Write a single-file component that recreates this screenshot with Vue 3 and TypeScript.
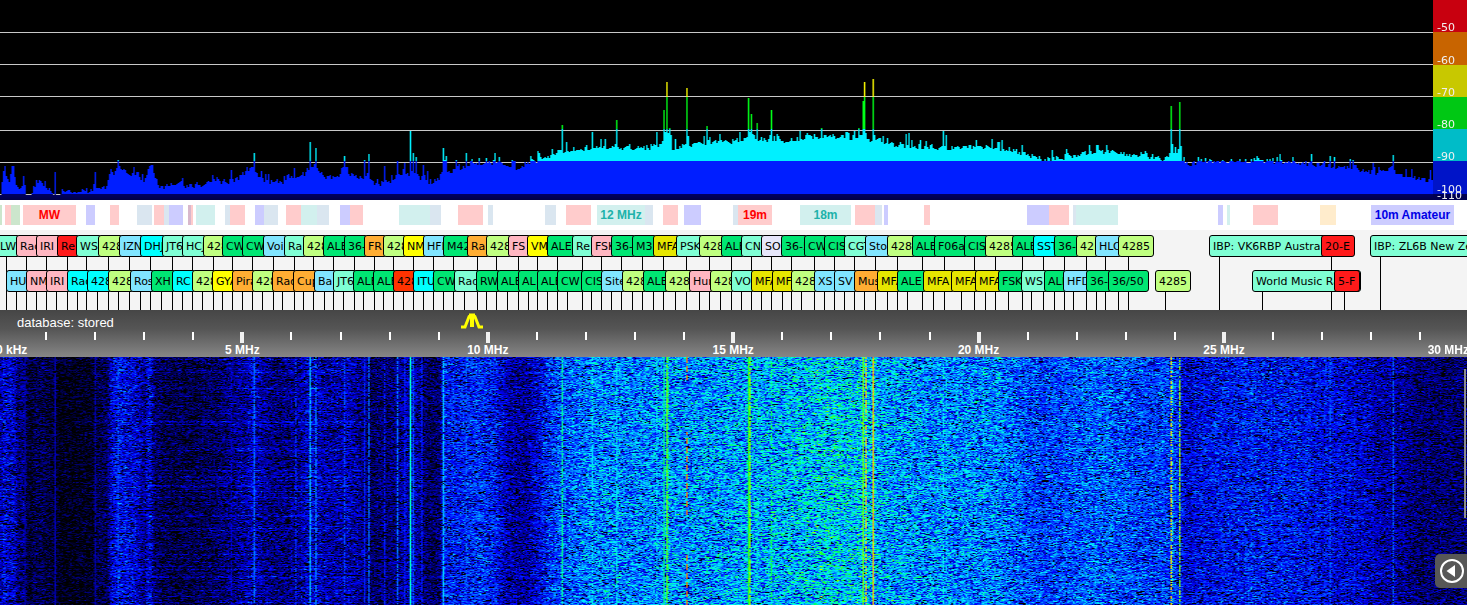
<script setup lang="ts">
import { onMounted, ref } from 'vue'

type Tone = 'aqua' | 'pink' | 'red' | 'lime' | 'sky' | 'cyan' | 'green' | 'orange' | 'yellow' | 'olive' | 'lavender' | 'scarlet'
type Station = [at: number, text: string, tone: Tone, width?: number]
type Point = [x: number, value: number]

const SPAN = 1467
const BINS = 1024
const pct = (v: number): string => (v / SPAN) * 100 + '%'

const upper: Station[] = [
  [-4, 'LW', 'aqua'], [16, 'Radio', 'pink'], [36, 'IRI', 'pink'], [57, 'Re', 'red'], [76, 'WS', 'aqua'],
  [98, '4285', 'lime'], [119, 'IZN', 'sky'], [140, 'DHJ', 'cyan'], [162, 'JT65', 'aqua'], [182, 'HCJB', 'aqua'],
  [203, '4285', 'lime'], [222, 'CW', 'green'], [242, 'CW', 'green'], [263, 'Voi', 'sky'], [284, 'Ra', 'aqua'],
  [303, '4285', 'lime'], [323, 'ALE', 'green'], [344, '36-50', 'green'], [364, 'FR', 'orange'], [383, '4285', 'lime'],
  [403, 'NM', 'yellow'], [423, 'HFDL', 'sky'], [443, 'M42', 'green'], [467, 'Ra', 'orange'], [486, '4285', 'lime'],
  [508, 'FS', 'pink'], [527, 'VM', 'yellow'], [547, 'ALE', 'green'], [572, 'Re', 'aqua'], [591, 'FSK', 'pink'],
  [611, '36-50', 'green'], [632, 'M3', 'green'], [653, 'MFA', 'olive'], [676, 'PSK', 'aqua'], [699, '4285', 'lime'],
  [721, 'ALE', 'green'], [741, 'CN', 'aqua'], [761, 'SO', 'lavender'], [781, '36-50', 'green'], [804, 'CW', 'green'],
  [824, 'CIS', 'green'], [844, 'CGT', 'aqua'], [865, 'Sto', 'sky'], [887, '428', 'lime'], [912, 'ALE', 'green'],
  [934, 'F06a', 'green'], [964, 'CIS', 'green'], [985, '4285', 'lime'], [1012, 'ALE', 'green'], [1033, 'SST', 'cyan'],
  [1054, '36-50', 'green'], [1076, '42', 'lime'], [1095, 'HLO', 'sky'], [1118, '4285', 'lime', 36],
  [1209, 'IBP: VK6RBP Australia', 'aqua', 140], [1321, '20-E', 'red', 34], [1370, 'IBP: ZL6B New Zealand', 'aqua', 150],
]

const lower: Station[] = [
  [6, 'HU', 'sky'], [26, 'NM', 'pink'], [46, 'IRI', 'pink'], [67, 'Radio', 'cyan'], [87, '4285', 'cyan'],
  [108, '4285', 'lime'], [130, 'Ross', 'sky'], [151, 'XH', 'green'], [172, 'RC', 'cyan'], [192, '4285', 'lime'],
  [212, 'GYA', 'yellow'], [232, 'Pirat', 'orange'], [252, '4285', 'lime'], [272, 'Radio', 'orange'], [293, 'Cup', 'orange'],
  [314, 'Ba', 'sky'], [333, 'JT65', 'aqua'], [353, 'ALE', 'green'], [373, 'ALE', 'green'], [393, '4285', 'scarlet'],
  [413, 'ITU', 'cyan'], [433, 'CW', 'green'], [454, 'Rad', 'aqua'], [476, 'RW', 'green'], [497, 'ALE', 'green'],
  [518, 'AL', 'green'], [537, 'ALE', 'green'], [557, 'CW', 'green'], [581, 'CIS', 'green'], [601, 'Site', 'sky'],
  [622, '4285', 'lime'], [643, 'ALE', 'green'], [665, '428', 'lime'], [689, 'Hur', 'pink'], [710, '4285', 'lime'],
  [731, 'VO', 'aqua'], [751, 'MFA', 'olive'], [772, 'MFA', 'olive'], [791, '4285', 'lime'], [814, 'XS', 'sky'],
  [834, 'SV', 'sky'], [854, 'Mus', 'orange'], [877, 'MFA', 'olive'], [897, 'ALE', 'green'], [923, 'MFA', 'olive'],
  [951, 'MFA', 'olive'], [975, 'MFA', 'olive'], [998, 'FSK', 'green'], [1021, 'WS', 'aqua'], [1044, 'ALE', 'green'],
  [1063, 'HFD', 'sky'], [1086, '36-50', 'green'], [1108, '36/50', 'green', 41], [1155, '4285', 'lime', 36],
  [1252, 'World Music Radio', 'aqua', 109], [1334, '5-F', 'red', 26],
]

const rows = [
  { name: 'upper', stations: upper },
  { name: 'lower', stations: lower },
].map((row) => ({
  name: row.name,
  stations: row.stations.map(([at, text, tone, width], i) => ({
    text,
    tone,
    left: pct(at),
    stem: pct(at + 10),
    width: pct(width ?? row.stations[i + 1][0] - at + 4),
  })),
}))

const bands: [from: number, to: number, tint: string, text?: string][] = [
  [0, 2, 'moss'], [5, 11, 'rose'], [11, 20, 'moss'], [23, 76, 'rose', 'MW'], [86, 95, 'violet'], [110, 119, 'rose'],
  [137, 152, 'steel'], [154, 164, 'rose'], [164, 169, 'steel'], [169, 183, 'violet'], [188, 191, 'mauve'], [191, 193, 'rose'],
  [196, 215, 'teal'], [225, 230, 'steel'], [230, 245, 'rose'], [255, 264, 'violet'], [264, 278, 'steel'], [286, 301, 'rose'],
  [301, 317, 'teal'], [317, 329, 'steel'], [340, 350, 'violet'], [350, 363, 'rose'], [399, 430, 'teal'], [430, 441, 'steel'],
  [458, 483, 'rose'], [488, 493, 'steel'], [545, 556, 'steel'], [566, 591, 'rose'], [597, 645, 'teal', '12 MHz'],
  [645, 653, 'steel'], [663, 678, 'rose'], [684, 701, 'violet'], [733, 738, 'steel'], [738, 772, 'rose', '19m'],
  [800, 851, 'teal', '18m'], [855, 875, 'rose'], [875, 882, 'steel'], [884, 888, 'violet'], [924, 930, 'rose'],
  [1027, 1049, 'violet'], [1049, 1069, 'rose'], [1073, 1076, 'steel'], [1076, 1118, 'teal'], [1218, 1223, 'violet'],
  [1227, 1230, 'teal'], [1253, 1278, 'rose'], [1320, 1336, 'sand'], [1371, 1454, 'violet', '10m Amateur'],
]

const ticks = Array.from({ length: 29 }, (_, i) => {
  const mhz = i + 1
  return { mhz, major: mhz % 5 === 0, left: pct(-3 + mhz * 49.08) }
})

const levels = [
  { text: '-50', cls: 'l50' },
  { text: '-60', cls: 'l60' },
  { text: '-70', cls: 'l70' },
  { text: '-80', cls: 'l80' },
  { text: '-90', cls: 'l90' },
  { text: '-100', cls: 'l100' },
  { text: '-110', cls: 'l110' },
]

function lerp(points: Point[], x: number): number {
  for (let i = 1; i < points.length; i++) {
    const [x1, v1] = points[i]
    if (x <= x1) {
      const [x0, v0] = points[i - 1]
      return v0 + ((v1 - v0) * (x - x0)) / (x1 - x0 || 1)
    }
  }
  return points[points.length - 1][1]
}

function random(seed: number): () => number {
  let s = seed
  return () => {
    s = (s + 0x6d2b79f5) | 0
    let t = Math.imul(s ^ (s >>> 15), 1 | s)
    t = (t + Math.imul(t ^ (t >>> 7), 61 | t)) ^ t
    return ((t ^ (t >>> 14)) >>> 0) / 4294967296
  }
}

const envelope: Point[] = [
  [0, 196], [2, 176], [4, 164], [6, 178], [9, 182], [12, 163], [14, 175], [16, 184], [20, 190], [23, 177], [25, 190], [26, 198],
  [31, 198], [33, 187], [39, 180], [43, 187], [45, 180], [46, 191], [50, 189], [53, 198], [59, 198], [62, 190], [68, 190],
  [73, 193], [84, 190], [91, 192], [94, 186], [98, 186], [100, 190], [106, 187], [110, 170], [114, 176], [118, 163], [122, 170],
  [130, 175], [136, 172], [142, 180], [146, 178], [149, 166], [152, 167], [155, 183], [162, 187], [174, 184], [186, 186],
  [200, 186], [212, 181], [224, 182], [236, 180], [247, 170], [252, 166], [256, 173], [264, 181], [276, 183], [288, 180],
  [300, 174], [306, 175], [310, 164], [316, 170], [326, 177], [338, 178], [344, 169], [350, 175], [362, 180], [367, 174],
  [374, 185], [384, 183], [394, 179], [398, 175], [404, 172], [408, 179], [411, 169], [416, 172], [420, 181], [430, 182],
  [438, 180], [443, 166], [449, 172], [456, 168], [470, 166], [480, 163], [494, 162], [501, 162], [504, 168], [515, 169],
  [524, 165], [536, 161], [548, 156], [560, 151], [575, 149], [600, 147], [620, 148], [650, 148], [661, 145], [664, 129],
  [668, 133], [672, 148], [686, 145], [700, 144], [720, 142], [746, 140], [750, 130], [756, 139], [780, 141], [810, 137],
  [830, 136], [850, 138], [859, 135], [863, 130], [868, 140], [880, 140], [895, 145], [930, 147], [950, 148], [990, 147],
  [1003, 150], [1020, 153], [1040, 159], [1060, 158], [1085, 153], [1110, 151], [1130, 155], [1150, 159], [1168, 158],
  [1171, 139], [1174, 157], [1179, 146], [1182, 161], [1188, 165], [1196, 162], [1210, 161], [1260, 161], [1300, 163],
  [1330, 166], [1350, 167], [1375, 173], [1391, 168], [1395, 174], [1420, 179], [1433, 180], [1467, 182],
]

const peaks: Point[] = [
  [55, 172], [94, 172], [118, 160], [230, 170], [253, 153], [294, 168], [309, 142], [315, 148], [344, 156], [364, 160],
  [368, 154], [384, 166], [397, 161], [404, 163], [410, 131], [413, 153], [415, 157], [422, 165], [427, 171], [443, 148],
  [445, 156], [455, 160], [465, 153], [472, 159], [485, 158], [494, 153], [538, 153], [562, 125], [592, 132], [600, 139],
  [616, 120], [656, 132], [663, 110], [666, 82], [686, 88], [688, 136], [706, 126], [719, 134], [748, 98], [750, 114],
  [757, 123], [771, 110], [799, 131], [821, 128], [854, 131], [862, 112], [864, 82], [863, 101], [873, 79], [905, 134],
  [908, 133], [943, 131], [946, 135], [991, 139], [1001, 140], [1021, 145], [1051, 150], [1096, 145], [1106, 145],
  [1171, 106], [1179, 102], [1198, 157], [1256, 156], [1311, 154], [1330, 156], [1349, 159], [1372, 163], [1392, 155],
  [1406, 169], [1411, 169], [1430, 170],
]

function drawSpectrum(canvas: HTMLCanvasElement): void {
  const ctx = canvas.getContext('2d')
  if (!ctx) return
  const rnd = random(11)
  ctx.fillStyle = '#000'
  ctx.fillRect(0, 0, BINS, 200)
  ctx.fillStyle = '#c8c8c8'
  for (const y of [32, 64, 96, 130, 162, 194]) ctx.fillRect(0, y, BINS, 1)
  const tops = new Array<number>(BINS)
  for (let i = 0; i < BINS; i++) {
    const x = (i / BINS) * SPAN
    const jump = rnd() < 0.2 ? -7 * rnd() : 0
    tops[i] = lerp(envelope, x) + (rnd() - 0.5) * 5 + jump * (x < 110 ? 0.3 : 1)
  }
  for (const [x, y] of peaks) {
    const i = Math.round((x / SPAN) * BINS)
    tops[i] = Math.min(tops[i], y)
  }
  const zones: [number, number, string][] = [
    [0, 33, '#ff0018'], [33, 65, '#ff8000'], [65, 97, '#ffff00'], [97, 129, '#00ff18'], [129, 161, '#00f0ff'], [161, 194, '#001eff'],
  ]
  tops.forEach((value, i) => {
    const top = Math.round(value)
    for (const [from, to, color] of zones) {
      const start = Math.max(from, top)
      if (start < to) {
        ctx.fillStyle = color
        ctx.fillRect(i, start, 1, to - start)
      }
    }
    if (top < 195) {
      ctx.fillStyle = '#000060'
      ctx.fillRect(i, 194, 1, 1)
    }
  })
  const floor = ctx.createLinearGradient(0, 194, 0, 200)
  floor.addColorStop(0, '#000064')
  floor.addColorStop(1, '#000046')
  ctx.fillStyle = floor
  ctx.fillRect(0, 195, BINS, 5)
}

const heat: Point[] = [
  [0, 0.17], [4, 0.21], [9, 0.17], [12, 0.21], [18, 0.09], [23, 0.13], [28, 0.03], [35, 0.08], [44, 0.06], [54, 0.04], [60, 0.01],
  [92, 0.02], [95, 0.07], [106, 0.07], [110, 0.19], [118, 0.24], [124, 0.22], [136, 0.19], [144, 0.14], [149, 0.22], [154, 0.1],
  [165, 0.06], [200, 0.07], [225, 0.1], [245, 0.14], [252, 0.19], [262, 0.13], [280, 0.11], [300, 0.14], [309, 0.2], [318, 0.17],
  [330, 0.14], [344, 0.17], [360, 0.13], [372, 0.09], [390, 0.1], [402, 0.15], [411, 0.18], [421, 0.13], [430, 0.08], [439, 0.1],
  [443, 0.26], [456, 0.24], [480, 0.27], [495, 0.24], [505, 0.16], [525, 0.14], [540, 0.22], [552, 0.29], [575, 0.34], [605, 0.365],
  [650, 0.365], [700, 0.38], [750, 0.4], [790, 0.415], [820, 0.44], [835, 0.445], [865, 0.43], [880, 0.4], [930, 0.37], [1000, 0.36],
  [1040, 0.29], [1070, 0.31], [1100, 0.33], [1140, 0.29], [1175, 0.28], [1185, 0.19], [1200, 0.22], [1250, 0.25], [1290, 0.24],
  [1330, 0.21], [1370, 0.17], [1400, 0.14], [1418, 0.1], [1467, 0.1],
]

/* x, level, share of rows in which the carrier is present */
const carriers: [number, number, number][] = [
  [24, 0.16, 0.8], [55, 0.18, 0.95], [94, 0.16, 0.8], [118, 0.32, 0.55], [230, 0.2, 0.6], [253, 0.36, 0.75], [295, 0.3, 0.5],
  [309, 0.43, 0.9], [315, 0.38, 0.75], [344, 0.32, 0.55], [364, 0.27, 0.85], [368, 0.36, 0.8], [384, 0.27, 0.6],
  [397, 0.36, 0.7], [404, 0.27, 0.75], [410, 0.51, 1], [413, 0.33, 0.8], [421, 0.27, 0.7], [443, 0.43, 0.9], [465, 0.35, 0.5],
  [562, 0.54, 0.75], [592, 0.47, 0.5], [616, 0.46, 0.7], [656, 0.46, 0.5], [663, 0.54, 0.8], [664, 0.56, 0.7],
  [666, 0.64, 0.95], [667, 0.56, 0.6], [706, 0.56, 0.16], [748, 0.61, 1], [749, 0.66, 0.85], [757, 0.52, 0.4], [771, 0.58, 0.5],
  [862, 0.58, 1], [863, 0.65, 1], [865, 0.74, 0.75], [873, 0.75, 1], [943, 0.49, 0.5], [946, 0.44, 0.5], [1171, 0.73, 0.6],
  [1172, 0.5, 0.4], [1179, 0.66, 0.8], [1310, 0.32, 0.3], [1330, 0.34, 0.5], [1354, 0.3, 0.4], [1392, 0.35, 0.7],
]

const palette: [number, number, number, number][] = [
  [0, 0, 0, 0], [0.12, 0, 0, 120], [0.24, 0, 0, 255], [0.38, 0, 130, 255], [0.48, 0, 245, 255], [0.6, 0, 255, 60],
  [0.66, 140, 255, 0], [0.72, 255, 240, 0], [0.8, 255, 130, 0], [1, 255, 0, 0],
]

function shade(v: number): [number, number, number] {
  const t = Math.min(1, Math.max(0, v))
  for (let i = 1; i < palette.length; i++) {
    const hi = palette[i]
    if (t <= hi[0]) {
      const lo = palette[i - 1]
      const f = (t - lo[0]) / (hi[0] - lo[0])
      return [lo[1] + (hi[1] - lo[1]) * f, lo[2] + (hi[2] - lo[2]) * f, lo[3] + (hi[3] - lo[3]) * f]
    }
  }
  return [255, 0, 0]
}

function drawWaterfall(canvas: HTMLCanvasElement): void {
  const ctx = canvas.getContext('2d')
  if (!ctx) return
  const height = canvas.height
  const rnd = random(77)
  const image = ctx.createImageData(BINS, height)
  const base = Array.from({ length: BINS }, (_, i) => lerp(heat, (i / BINS) * SPAN) + (rnd() - 0.5) * 0.025)
  for (let y = 0; y < height; y++) {
    const burst = rnd() < 0.1 ? 0.06 : 0
    let previous = 0
    const row = base.map((mean, i) => {
      const x = (i / BINS) * SPAN
      const extra = x > 150 && x < 360 ? burst : burst * 0.3
      const fresh = Math.log(-Math.log(rnd() * 0.9998 + 0.0001)) + 0.45
      const noise = rnd() < 0.2 ? previous : fresh
      previous = noise
      return mean + extra + noise * (0.058 + mean * 0.1)
    })
    for (const [x, level, share] of carriers) {
      if (rnd() < share) {
        const i = Math.round((x / SPAN) * BINS)
        row[i] = Math.max(row[i], level + (rnd() - 0.5) * 0.06)
      }
    }
    const keyed = y < 23 || (y > 74 && y < 158) || y > 196
    if (keyed && y % 9 < 6) row[Math.round((686 / SPAN) * BINS)] = 0.82
    row.forEach((value, i) => {
      const [r, g, b] = shade(value)
      const o = (y * BINS + i) * 4
      image.data[o] = r
      image.data[o + 1] = g
      image.data[o + 2] = b
      image.data[o + 3] = 255
    })
  }
  ctx.putImageData(image, 0, 0)
}

const spectrum = ref<HTMLCanvasElement | null>(null)
const waterfall = ref<HTMLCanvasElement | null>(null)
const panelOpen = ref(false)

onMounted(() => {
  if (spectrum.value) drawSpectrum(spectrum.value)
  if (waterfall.value) drawWaterfall(waterfall.value)
})
</script>

<template>
  <main class="receiver">
    <section class="spectrum">
      <canvas ref="spectrum" class="plot" width="1024" height="200"></canvas>
      <div class="levels">
        <span v-for="l in levels" :key="l.text" class="level" :class="l.cls">{{ l.text }}</span>
      </div>
    </section>

    <section class="bands">
      <div
        v-for="[from, to, tint, text] in bands"
        :key="from"
        class="band"
        :class="tint"
        :style="{ left: pct(from), width: pct(to - from) }"
      >{{ text }}</div>
    </section>

    <section class="stations">
      <div v-for="row in rows" :key="row.name" class="row" :class="row.name">
        <span v-for="(s, i) in row.stations" :key="'stem' + i" class="stem" :style="{ left: s.stem }"></span>
        <button
          v-for="(s, i) in row.stations"
          :key="i"
          type="button"
          class="station"
          :class="s.tone"
          :style="{ left: s.left, width: s.width }"
        >{{ s.text }}</button>
      </div>
    </section>

    <section class="scale">
      <p class="status">database: stored</p>
      <svg class="passband" viewBox="0 0 22 16" width="22" height="16" aria-hidden="true">
        <path d="M0 14H4L8.5 2.5M13.5 2.5L18 14H22" fill="none" stroke="#ffff00" stroke-width="3" />
        <path d="M8 0.5H14V5H13V14H9V5H8Z" fill="#ffff00" />
      </svg>
      <template v-for="t in ticks" :key="t.mhz">
        <span class="tick" :class="{ major: t.major }" :style="{ left: t.left }"></span>
        <span v-if="t.major" class="freq" :style="{ left: t.left }">{{ t.mhz }} MHz</span>
      </template>
      <span class="freq first">0 kHz</span>
      <span class="freq last">30 MHz</span>
    </section>

    <section class="waterfall">
      <canvas ref="waterfall" class="plot" width="1024" height="248"></canvas>
      <div class="scroll-thumb"></div>
      <button type="button" class="panel-toggle" aria-label="Control panel" :aria-expanded="panelOpen" @click="panelOpen = !panelOpen">
        <svg viewBox="0 0 26 26" width="26" height="26" aria-hidden="true">
          <circle cx="13" cy="13" r="11" fill="none" stroke="#fff" stroke-width="2" />
          <path d="M7.5 13L16 7V19Z" fill="#fff" />
        </svg>
      </button>
    </section>
  </main>
</template>

<style>
body {
  margin: 0;
  background: #000;
}
</style>

<style scoped>
.receiver {
  display: flex;
  flex-direction: column;
  height: 100vh;
  overflow: hidden;
  font-family: "Liberation Sans", Arial, sans-serif;
}
.plot {
  display: block;
  width: 100%;
  height: 100%;
}
.spectrum {
  position: relative;
  flex: none;
  height: 200px;
  overflow: hidden;
}
.levels {
  position: absolute;
  top: 0;
  right: 0;
  bottom: 0;
  width: 34px;
  display: flex;
  flex-direction: column;
}
.level {
  display: flex;
  align-items: flex-end;
  flex: none;
  box-sizing: border-box;
  height: 32px;
  padding-left: 4px;
  color: #f0f0f0;
  font-family: "DejaVu Sans", Verdana, sans-serif;
  font-size: 11px;
  line-height: 8px;
}
.l50 { background: #c8000f; }
.l60 { background: #c86400; height: 33px; }
.l70 { background: #c8c800; }
.l80 { background: #00c814; }
.l90 { background: #00bcc8; }
.l100 { background: #0014c8; height: 33px; }
.l110 { background: #000050; height: 6px; }

.bands {
  position: relative;
  flex: none;
  height: 30px;
  background: #fff;
  overflow: hidden;
}
.band {
  position: absolute;
  top: 5px;
  height: 20px;
  font-size: 12px;
  font-weight: bold;
  line-height: 20px;
  text-align: center;
  white-space: nowrap;
}
.rose { background: #ffcccc; color: #ff0000; }
.teal { background: #d2f0ee; color: #20b2aa; }
.violet { background: #ccccff; color: #0000e6; }
.steel { background: #dae6f0; }
.moss { background: #cce6cc; }
.mauve { background: #d8b8cc; }
.sand { background: #ffeccc; }

.stations {
  flex: none;
  box-sizing: border-box;
  height: 80px;
  padding-top: 5px;
  background: #f4f4f4;
  overflow: hidden;
}
.row {
  position: relative;
  height: 35px;
}
.station {
  position: absolute;
  top: 0;
  box-sizing: border-box;
  height: 22px;
  margin: 0;
  padding: 2px 3px 0;
  border: 1px solid #000;
  border-radius: 3px;
  color: #000;
  font-family: "DejaVu Sans", Verdana, sans-serif;
  font-size: 11px;
  line-height: 18px;
  text-align: left;
  white-space: nowrap;
  overflow: hidden;
  cursor: pointer;
}
.stem {
  position: absolute;
  top: 0;
  width: 1px;
  height: 80px;
  background: #000;
}
.aqua { background: #7fffd4; }
.pink { background: #ffb6c1; }
.red { background: #ff1a1a; }
.lime { background: #bfff80; }
.sky { background: #80e5ff; }
.cyan { background: #00ffff; }
.green { background: #00e673; }
.orange { background: #ffad33; }
.yellow { background: #ffff00; }
.olive { background: #e6e600; }
.lavender { background: #e6e6fa; }
.scarlet { background: #ff3300; }

.scale {
  position: relative;
  flex: none;
  height: 47px;
  background: linear-gradient(#464646, #555 40%, #868686);
  color: #fff;
  overflow: hidden;
}
.status {
  margin: 0;
  padding: 5px 17px 0;
  font-size: 13px;
  line-height: 16px;
}
.passband {
  position: absolute;
  top: 3px;
  left: 31.4%;
}
.tick {
  position: absolute;
  top: 22px;
  width: 2px;
  height: 8px;
  margin-left: -1px;
  background: #fff;
}
.tick.major {
  width: 4px;
  height: 11px;
  margin-left: -2px;
  background: #f0f0f0;
}
.freq {
  position: absolute;
  top: 33px;
  font-size: 12px;
  font-weight: bold;
  line-height: 14px;
  white-space: nowrap;
  transform: translateX(-50%);
}
.freq.first {
  left: -4px;
  transform: none;
}
.freq.last {
  right: -2px;
  transform: none;
}

.waterfall {
  position: relative;
  flex: 1;
  min-height: 0;
  background: #000;
  overflow: hidden;
}
.scroll-thumb {
  position: absolute;
  top: 12px;
  right: 1px;
  width: 2px;
  height: 149px;
  background: #8c8c8c;
}
.panel-toggle {
  position: absolute;
  right: 0;
  bottom: 17px;
  display: flex;
  align-items: center;
  justify-content: center;
  width: 32px;
  height: 34px;
  margin: 0;
  padding: 0 0 0 2px;
  border: 0;
  border-radius: 5px 0 0 5px;
  background: #575757;
  cursor: pointer;
}
</style>
